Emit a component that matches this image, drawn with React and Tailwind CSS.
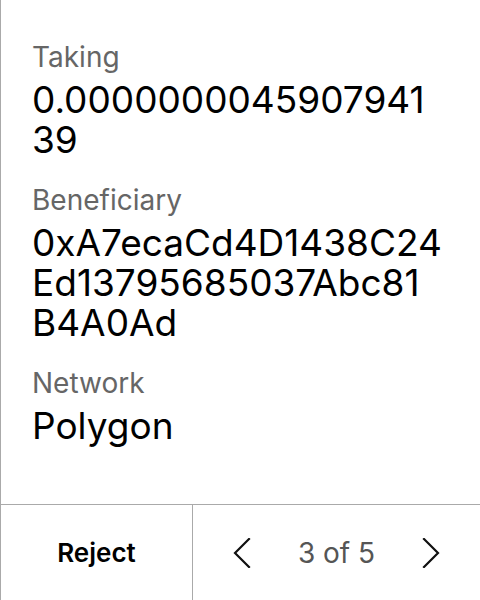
import React from "react";

const rows = [
  { label: "Taking", value: "0.000000004590794139" },
  { label: "Beneficiary", value: "0xA7ecaCd4D1438C24Ed13795685037Abc81B4A0Ad" },
  { label: "Network", value: "Polygon" },
];

function Chevron({ dir }) {
  const pts = dir === "left" ? "16,1 2,15 16,29" : "2,1 16,15 2,29";
  return (
    <svg width="18" height="30" viewBox="0 0 18 30" fill="none">
      <polyline points={pts} stroke="#111" strokeWidth="2.2" strokeLinecap="square" />
    </svg>
  );
}

export default function App() {
  return (
    <div
      className="flex h-[600px] w-[480px] flex-col border-l border-[#aaa] bg-white text-black"
      style={{ fontFamily: "Inter, 'Noto Sans', sans-serif" }}
    >
      <div className="flex flex-1 flex-col gap-[24px] pl-[31px] pr-[38px] pt-[41px]">
        {rows.map((r) => (
          <div key={r.label} className="flex flex-col gap-[7px]">
            <div className="text-[28px] leading-[32px] text-[#666]">{r.label}</div>
            <div className="break-all text-[37px] leading-[40px]">{r.value}</div>
          </div>
        ))}
      </div>
      <div className="flex h-[96px] border-t border-[#aaa]">
        <button className="flex w-[192px] items-center justify-center border-r border-[#aaa] text-[26px] font-semibold">
          Reject
        </button>
        <div className="flex flex-1 items-center justify-center gap-[47px]">
          <Chevron dir="left" />
          <span className="text-[28px] text-[#555]">3 of 5</span>
          <Chevron dir="right" />
        </div>
      </div>
    </div>
  );
}
